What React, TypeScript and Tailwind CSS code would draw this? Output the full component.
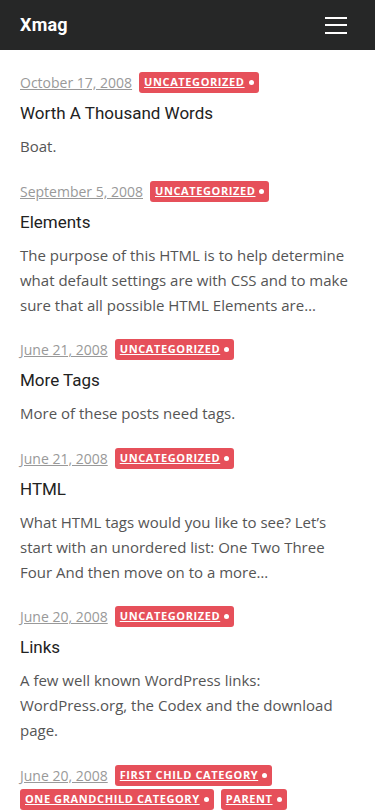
const posts = [
  { date: 'October 17, 2008', cats: ['Uncategorized'], title: 'Worth A Thousand Words', excerpt: 'Boat.' },
  { date: 'September 5, 2008', cats: ['Uncategorized'], title: 'Elements', excerpt: 'The purpose of this HTML is to help determine what default settings are with CSS and to make sure that all possible HTML Elements are…' },
  { date: 'June 21, 2008', cats: ['Uncategorized'], title: 'More Tags', excerpt: 'More of these posts need tags.' },
  { date: 'June 21, 2008', cats: ['Uncategorized'], title: 'HTML', excerpt: 'What HTML tags would you like to see? Let’s start with an unordered list: One Two Three Four And then move on to a more…' },
  { date: 'June 20, 2008', cats: ['Uncategorized'], title: 'Links', excerpt: 'A few well known WordPress links: WordPress.org, the Codex and the download page.' },
  { date: 'June 20, 2008', cats: ['First Child Category', 'One Grandchild Category', 'Parent'], title: '', excerpt: '' },
]

export default function App() {
  return (
    <div className="min-h-screen bg-white font-['Open_Sans',sans-serif]">
      <header className="h-[50px] bg-[#262727] flex items-center justify-between pl-5 pr-7">
        <a href="#" className="text-white text-lg font-bold font-['Roboto',sans-serif] tracking-[0.2px]">Xmag</a>
        <button className="w-[22px] flex flex-col gap-[5.5px]" aria-label="Menu">
          <span className="block h-[2px] bg-white" />
          <span className="block h-[2px] bg-white" />
          <span className="block h-[2px] bg-white" />
        </button>
      </header>

      <main className="px-5 pt-[22px]">
        {posts.map((post, i) => (
          <article key={i} className="mb-[21.5px]">
            <div className="flex flex-wrap items-center gap-x-[7px] gap-y-[3px]">
              <a href="#" className="text-sm text-[#999] underline leading-[21px]">{post.date}</a>
              {post.cats.map(cat => (
                <a key={cat} href="#" className="h-[21px] flex items-center gap-[4px] px-[5px] rounded-[3px] bg-[#e6505a] text-white text-[11px] font-bold uppercase tracking-[0.6px]">
                  <span className="underline">{cat}</span>
                  <span className="w-[5px] h-[5px] rounded-full bg-white" />
                </a>
              ))}
            </div>
            {post.title && (
              <h2 className="mt-2 text-[17px] leading-[25px] text-[#222] font-['Roboto',sans-serif]">{post.title}</h2>
            )}
            {post.excerpt && (
              <p className="mt-2 text-[15px] leading-[25px] text-[#555]">{post.excerpt}</p>
            )}
          </article>
        ))}
      </main>
    </div>
  )
}
